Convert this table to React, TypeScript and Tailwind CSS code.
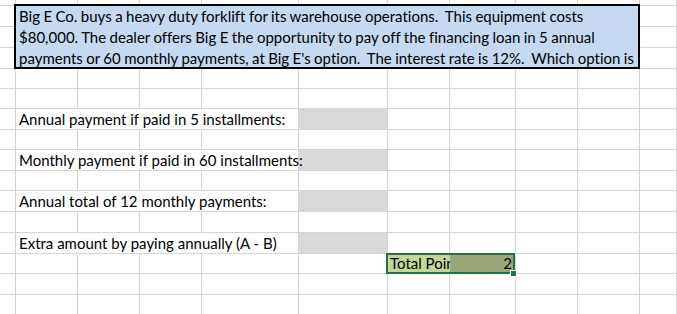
const cell = "border-r border-b border-[#d4d4d4]"

const labels = [
  { row: "row-start-7", gray: "row-start-7", text: "Annual payment if paid in 5 installments:" },
  { row: "row-start-9", gray: "row-start-9", text: "Monthly payment if paid in 60 installments:" },
  { row: "row-start-11", gray: "row-start-11", text: "Annual total of 12 monthly payments:" },
  { row: "row-start-13", gray: "row-start-13", text: "Extra amount by paying annually (A - B)" },
]

const intro = [
  "Big E Co. buys a heavy duty forklift for its warehouse operations.  This equipment costs",
  "$80,000. The dealer offers Big E the opportunity to pay off the financing loan in 5 annual",
  "payments or 60 monthly payments, at Big E's option.  The interest rate is 12%.  Which option is",
]

export default function App() {
  // 11 columns x 16 rows, minus the merged / filled cells placed below
  const fillers = Array.from({ length: 176 - 27 - 16 - 4 - 2 })

  return (
    <div className="w-[677px] h-[314px] overflow-hidden bg-white text-black font-['Lato',sans-serif] text-[15px] [font-variant-ligatures:none]">
      <div className="grid grid-cols-[16px_62px_62px_62px_97px_89px_62px_66px_62px_62px_1fr] grid-rows-[6px_21px_21px_21px_20px_20px_21px_20px_21px_20px_21px_21px_21px_20px_21px_20px]">
        {/* problem statement, merged cell */}
        <div className="col-start-2 col-span-9 row-start-2 row-span-3 ml-[-2px] mt-[-2px] relative z-10 border-2 border-black bg-[#c5d9f1] pl-[3px] overflow-hidden [word-spacing:-0.4px]">
          {intro.map((line) => (
            <div key={line} className="whitespace-pre leading-[20.75px]">
              {line}
            </div>
          ))}
        </div>

        {labels.map((l) => (
          <div key={l.text} className="contents">
            <div className={`col-start-2 col-span-4 ${l.row} ${cell} relative z-10 flex items-end pl-[3px] whitespace-nowrap leading-[18px] pb-[1px]`}>
              {l.text}
            </div>
            <div className={`col-start-6 ${l.gray} ${cell} bg-[#d9d9d9]`} />
          </div>
        ))}

        {/* selected range */}
        <div className={`col-start-7 col-span-2 row-start-14 ${cell} relative z-20 flex`}>
          <div className="w-[62px] bg-[#c4d79b] overflow-hidden flex items-end pl-[2px] whitespace-nowrap leading-[18px] pb-[1px]">
            Total Points
          </div>
          <div className="flex-1 bg-[#9aa878] flex items-end justify-end pr-[3px] leading-[18px] pb-[1px]">2</div>
          <div className="absolute left-[-2px] top-[-1px] right-0 bottom-[-1px] border-2 border-[#217346]" />
          <div className="absolute right-[-2px] bottom-[-4px] w-[7px] h-[7px] bg-[#217346] border border-white" />
        </div>

        {fillers.map((_, i) => (
          <div key={i} className={cell} />
        ))}
      </div>
    </div>
  )
}
